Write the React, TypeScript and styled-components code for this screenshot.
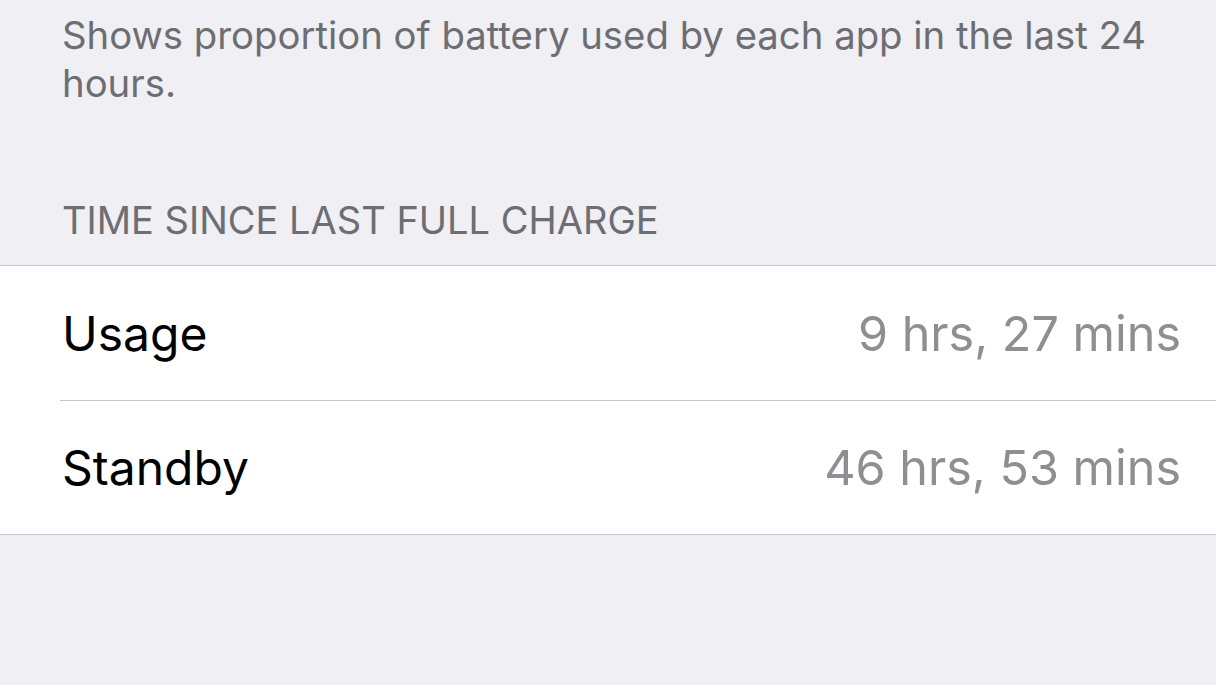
import React from 'react'
import styled, { createGlobalStyle } from 'styled-components'

const GlobalStyle = createGlobalStyle`
  html, body {
    margin: 0;
    padding: 0;
    background: #efeff4;
    font-family: Inter, "Noto Sans", sans-serif;
  }
`

const Screen = styled.main`
  width: 1216px;
  height: 685px;
  overflow: hidden;
  background: #efeff4;
`

const Footnote = styled.p`
  margin: 0;
  padding: 11px 62px 0 62px;
  font-size: 38.3px;
  line-height: 48px;
  color: #6d6d72;
`

const SectionHeader = styled.h2`
  margin: 0;
  padding: 89px 62px 21px 62px;
  font-size: 38px;
  line-height: 48px;
  font-weight: 400;
  color: #6d6d72;
  text-transform: uppercase;
`

const Group = styled.section`
  background: #fff;
  border-top: 1px solid #c8c7cc;
  border-bottom: 1px solid #c8c7cc;
`

const Row = styled.div<{ $divider?: boolean }>`
  display: flex;
  align-items: center;
  justify-content: space-between;
  height: 134px;
  margin-left: 60px;
  padding: 0 35px 0 2px;
  box-sizing: border-box;
  border-top: ${(p) => (p.$divider ? '1px solid #c8c7cc' : 'none')};
`

const Label = styled.span`
  font-size: 48px;
  color: #000;
`

const Value = styled.span`
  font-size: 48.5px;
  color: #8e8e93;
`

const rows = [
  { label: 'Usage', value: '9 hrs, 27 mins' },
  { label: 'Standby', value: '46 hrs, 53 mins' },
]

const App = () => (
  <Screen>
    <GlobalStyle />
    <Footnote>
      Shows proportion of battery used by each app in the last 24 hours.
    </Footnote>
    <SectionHeader>Time since last full charge</SectionHeader>
    <Group>
      {rows.map((r, i) => (
        <Row key={r.label} $divider={i > 0}>
          <Label>{r.label}</Label>
          <Value>{r.value}</Value>
        </Row>
      ))}
    </Group>
  </Screen>
)

export default App
